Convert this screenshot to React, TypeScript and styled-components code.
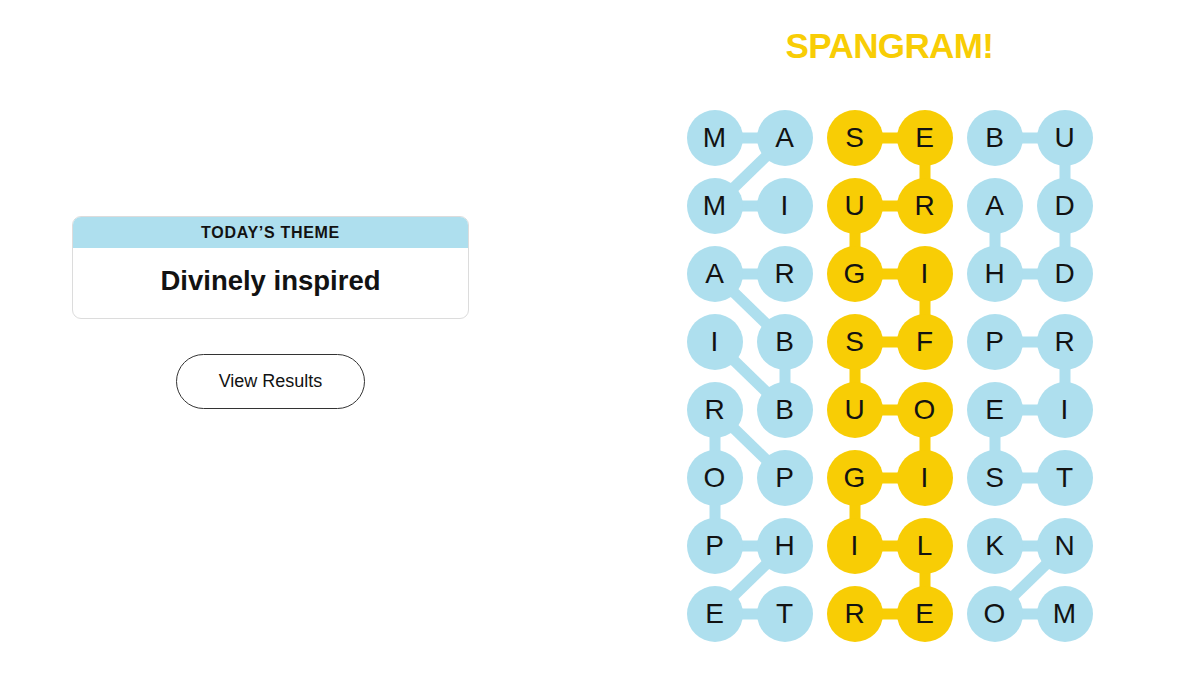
import React from 'react'
import styled, { createGlobalStyle } from 'styled-components'

const GlobalStyle = createGlobalStyle`
  html, body {
    margin: 0;
    padding: 0;
    background: #ffffff;
  }
  body {
    font-family: 'Liberation Sans', Arial, sans-serif;
    color: #121212;
  }
`

const BLUE = '#aedfee'
const YELLOW = '#f8cd05'
const CELL_W = 70
const CELL_H = 68
const DOT = 56

const LETTERS = [
  'MASEBU',
  'MIURAD',
  'ARGIHD',
  'IBSFPR',
  'RBUOEI',
  'OPGIST',
  'PHILKN',
  'ETREOM',
]

type Cell = [number, number]

interface Word {
  path: Cell[]
  spangram?: boolean
}

// found words, as [row, col] in reading order
const WORDS: Word[] = [
  { path: [[1, 1], [1, 0], [0, 1], [0, 0]] },
  { path: [[2, 1], [2, 0], [3, 1], [4, 1], [3, 0]] },
  { path: [[5, 1], [4, 0], [5, 0], [6, 0], [6, 1], [7, 0], [7, 1]] },
  {
    spangram: true,
    path: [
      [7, 2], [7, 3], [6, 3], [6, 2], [5, 2], [5, 3], [4, 3], [4, 2],
      [3, 2], [3, 3], [2, 3], [2, 2], [1, 2], [1, 3], [0, 3], [0, 2],
    ],
  },
  { path: [[0, 4], [0, 5], [1, 5], [2, 5], [2, 4], [1, 4]] },
  { path: [[3, 4], [3, 5], [4, 5], [4, 4], [5, 4], [5, 5]] },
  { path: [[7, 5], [7, 4], [6, 5], [6, 4]] },
]

const Page = styled.div`
  display: grid;
  grid-template-columns: 541px 1fr;
  width: 1200px;
  height: 675px;
  overflow: hidden;
`

const LeftPanel = styled.section`
  display: flex;
  flex-direction: column;
  align-items: center;
  padding-top: 216px;
`

const ThemeCard = styled.div`
  width: 397px;
  border: 1px solid #dcdcdc;
  border-radius: 9px;
  overflow: hidden;
  box-sizing: border-box;
`

const ThemeHeader = styled.div`
  background: ${BLUE};
  height: 31px;
  display: flex;
  align-items: center;
  justify-content: center;
  font-size: 16px;
  font-weight: 700;
  letter-spacing: 0.7px;
  color: #121212;
`

const ThemeTitle = styled.div`
  height: 70px;
  display: flex;
  align-items: center;
  justify-content: center;
  font-size: 27.5px;
  font-weight: 700;
  color: #121212;
  padding-bottom: 4px;
  box-sizing: border-box;
`

const ResultsButton = styled.button`
  margin-top: 35px;
  width: 189px;
  height: 55px;
  border: 1px solid #333333;
  border-radius: 28px;
  background: #ffffff;
  font-family: 'Liberation Sans', Arial, sans-serif;
  font-size: 18px;
  color: #121212;
  cursor: pointer;
`

const RightPanel = styled.section`
  display: flex;
  flex-direction: column;
  align-items: center;
  padding-top: 26px;
  padding-left: 38px;
`

const Banner = styled.h1`
  margin: 0;
  font-size: 35px;
  line-height: 40px;
  font-weight: 700;
  letter-spacing: -0.6px;
  color: ${YELLOW};
`

const Board = styled.div`
  position: relative;
  margin-top: 38px;
  display: grid;
  grid-template-columns: repeat(6, ${CELL_W}px);
  grid-template-rows: repeat(8, ${CELL_H}px);
`

const Links = styled.svg`
  position: absolute;
  inset: 0;
  z-index: 0;
`

const Tile = styled.div`
  position: relative;
  z-index: 1;
  display: flex;
  align-items: center;
  justify-content: center;
`

const Dot = styled.span<{ $color: string }>`
  width: ${DOT}px;
  height: ${DOT}px;
  border-radius: 50%;
  background: ${({ $color }) => $color};
  display: flex;
  align-items: center;
  justify-content: center;
  font-size: 28px;
  color: #121212;
`

const centre = ([r, c]: Cell) => ({
  x: c * CELL_W + CELL_W / 2,
  y: r * CELL_H + CELL_H / 2,
})

const colorOf = (r: number, c: number) => {
  const w = WORDS.find((word) => word.path.some(([pr, pc]) => pr === r && pc === c))
  return w?.spangram ? YELLOW : BLUE
}

const App: React.FC = () => {
  return (
    <>
      <GlobalStyle />
      <Page>
        <LeftPanel>
          <ThemeCard>
            <ThemeHeader>TODAY’S THEME</ThemeHeader>
            <ThemeTitle>Divinely inspired</ThemeTitle>
          </ThemeCard>
          <ResultsButton>View Results</ResultsButton>
        </LeftPanel>
        <RightPanel>
          <Banner>SPANGRAM!</Banner>
          <Board>
            <Links width={CELL_W * 6} height={CELL_H * 8}>
              {WORDS.map((word, wi) =>
                word.path.slice(1).map((cell, i) => {
                  const a = centre(word.path[i])
                  const b = centre(cell)
                  return (
                    <line
                      key={`${wi}-${i}`}
                      x1={a.x}
                      y1={a.y}
                      x2={b.x}
                      y2={b.y}
                      stroke={word.spangram ? YELLOW : BLUE}
                      strokeWidth={11}
                    />
                  )
                })
              )}
            </Links>
            {LETTERS.map((row, r) =>
              row.split('').map((ch, c) => (
                <Tile key={`${r}-${c}`}>
                  <Dot $color={colorOf(r, c)}>{ch}</Dot>
                </Tile>
              ))
            )}
          </Board>
        </RightPanel>
      </Page>
    </>
  )
}

export default App
